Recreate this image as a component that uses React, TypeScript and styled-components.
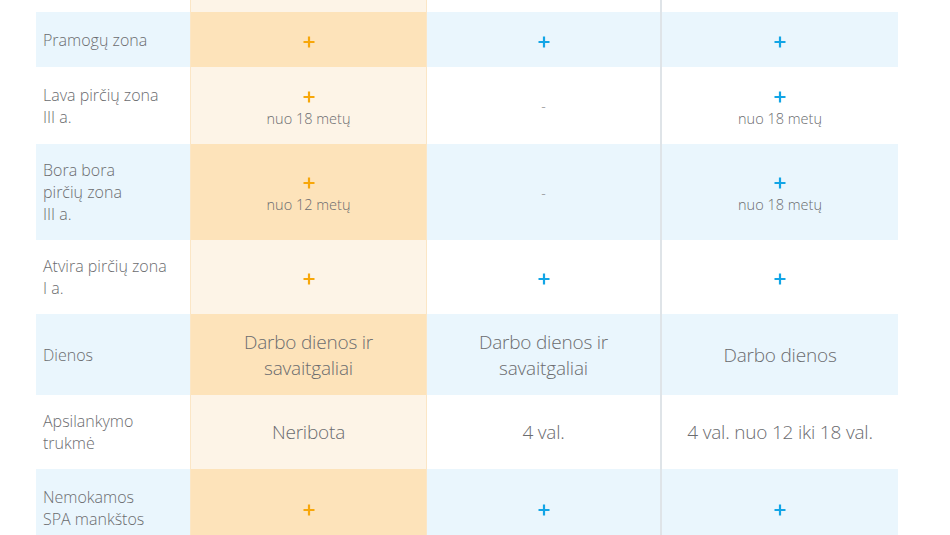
import React from 'react';
import styled, { createGlobalStyle } from 'styled-components';

type Value = { plus?: boolean; note?: string; lines?: string[]; dash?: boolean };

type RowData = {
  label: string[];
  height: number;
  shaded: boolean;
  cells: [Value, Value, Value];
};

const rows: RowData[] = [
  {
    label: ['Pramogų zona'],
    height: 55,
    shaded: true,
    cells: [{ plus: true }, { plus: true }, { plus: true }],
  },
  {
    label: ['Lava pirčių zona', 'III a.'],
    height: 77,
    shaded: false,
    cells: [{ plus: true, note: 'nuo 18 metų' }, { dash: true }, { plus: true, note: 'nuo 18 metų' }],
  },
  {
    label: ['Bora bora', 'pirčių zona', 'III a.'],
    height: 96,
    shaded: true,
    cells: [{ plus: true, note: 'nuo 12 metų' }, { dash: true }, { plus: true, note: 'nuo 18 metų' }],
  },
  {
    label: ['Atvira pirčių zona', 'I a.'],
    height: 74,
    shaded: false,
    cells: [{ plus: true }, { plus: true }, { plus: true }],
  },
  {
    label: ['Dienos'],
    height: 81,
    shaded: true,
    cells: [
      { lines: ['Darbo dienos ir', 'savaitgaliai'] },
      { lines: ['Darbo dienos ir', 'savaitgaliai'] },
      { lines: ['Darbo dienos'] },
    ],
  },
  {
    label: ['Apsilankymo', 'trukmė'],
    height: 74,
    shaded: false,
    cells: [{ lines: ['Neribota'] }, { lines: ['4 val.'] }, { lines: ['4 val. nuo 12 iki 18 val.'] }],
  },
  {
    label: ['Nemokamos', 'SPA mankštos'],
    height: 78,
    shaded: true,
    cells: [{ plus: true }, { plus: true }, { plus: true }],
  },
];

function Plus({ color }: { color: string }) {
  return (
    <PlusIcon width='12' height='12' viewBox='0 0 12 12'>
      <path d='M6 0.5v11M0.5 6h11' stroke={color} strokeWidth='2.2' />
    </PlusIcon>
  );
}

function CellContent({ value, featured }: { value: Value; featured: boolean }) {
  if (value.dash) return <Dash>-</Dash>;
  if (value.lines)
    return (
      <>
        {value.lines.map((line) => (
          <BigText key={line}>{line}</BigText>
        ))}
      </>
    );
  return (
    <>
      {value.plus && (
        <PlusLine>
          <Plus color={featured ? '#f7a70a' : '#12a5e6'} />
        </PlusLine>
      )}
      {value.note && <Note>{value.note}</Note>}
    </>
  );
}

export default function App() {
  return (
    <>
      <GlobalStyle />
      <Page>
        <Row $h={12} $shaded={false}>
          <Label />
          <Cell $featured $shaded={false} />
          <Cell $divider />
          <Cell />
        </Row>
        {rows.map((row) => (
          <Row key={row.label.join(' ')} $h={row.height} $shaded={row.shaded}>
            <Label>
              {row.label.map((line) => (
                <span key={line}>{line}</span>
              ))}
            </Label>
            <Cell $featured $shaded={row.shaded}>
              <CellContent value={row.cells[0]} featured />
            </Cell>
            <Cell $divider>
              <CellContent value={row.cells[1]} featured={false} />
            </Cell>
            <Cell>
              <CellContent value={row.cells[2]} featured={false} />
            </Cell>
          </Row>
        ))}
      </Page>
    </>
  );
}

const GlobalStyle = createGlobalStyle`
  html, body {
    margin: 0;
    padding: 0;
    background: #ffffff;
  }
  body {
    font-family: 'Open Sans', 'Noto Sans', sans-serif;
    color: #6b6c6f;
    overflow: hidden;
  }
`;

const Page = styled.div`
  width: 950px;
  height: 535px;
  overflow: hidden;
  padding-left: 36px;
  box-sizing: border-box;
`;

const Row = styled.div<{ $h: number; $shaded: boolean }>`
  display: grid;
  grid-template-columns: 154px 237px 235px 236px;
  width: 862px;
  height: ${(p) => p.$h}px;
  background: ${(p) => (p.$shaded ? '#eaf6fd' : 'transparent')};
`;

const Label = styled.div`
  display: flex;
  flex-direction: column;
  justify-content: center;
  padding-left: 7px;
  font-size: 16px;
  font-weight: 300;
  line-height: 22px;
  color: #6b6c6f;
`;

const Cell = styled.div<{ $featured?: boolean; $shaded?: boolean; $divider?: boolean }>`
  display: flex;
  flex-direction: column;
  align-items: center;
  justify-content: center;
  text-align: center;
  box-sizing: border-box;
  background: ${(p) => (p.$featured ? (p.$shaded ? '#fde3ba' : '#fdf4e7') : 'transparent')};
  border-left: ${(p) => (p.$featured ? '1px solid #fbe6c6' : 'none')};
  border-right: ${(p) =>
    p.$featured ? '1px solid #fbe6c6' : p.$divider ? '2px solid #dfe4e8' : 'none'};
`;

const PlusLine = styled.div`
  height: 22px;
  margin-top: 4px;
  display: flex;
  align-items: center;
  justify-content: center;
`;

const PlusIcon = styled.svg`
  display: block;
`;

const Note = styled.div`
  font-size: 14.5px;
  font-weight: 300;
  line-height: 22px;
  color: #6b6c6f;
`;

const Dash = styled.div`
  font-size: 14px;
  font-weight: 300;
  color: #8a8b8e;
`;

const BigText = styled.div`
  font-size: 19px;
  font-weight: 300;
  line-height: 26px;
  letter-spacing: -0.2px;
  white-space: nowrap;
  color: #6b6c6f;
`;
